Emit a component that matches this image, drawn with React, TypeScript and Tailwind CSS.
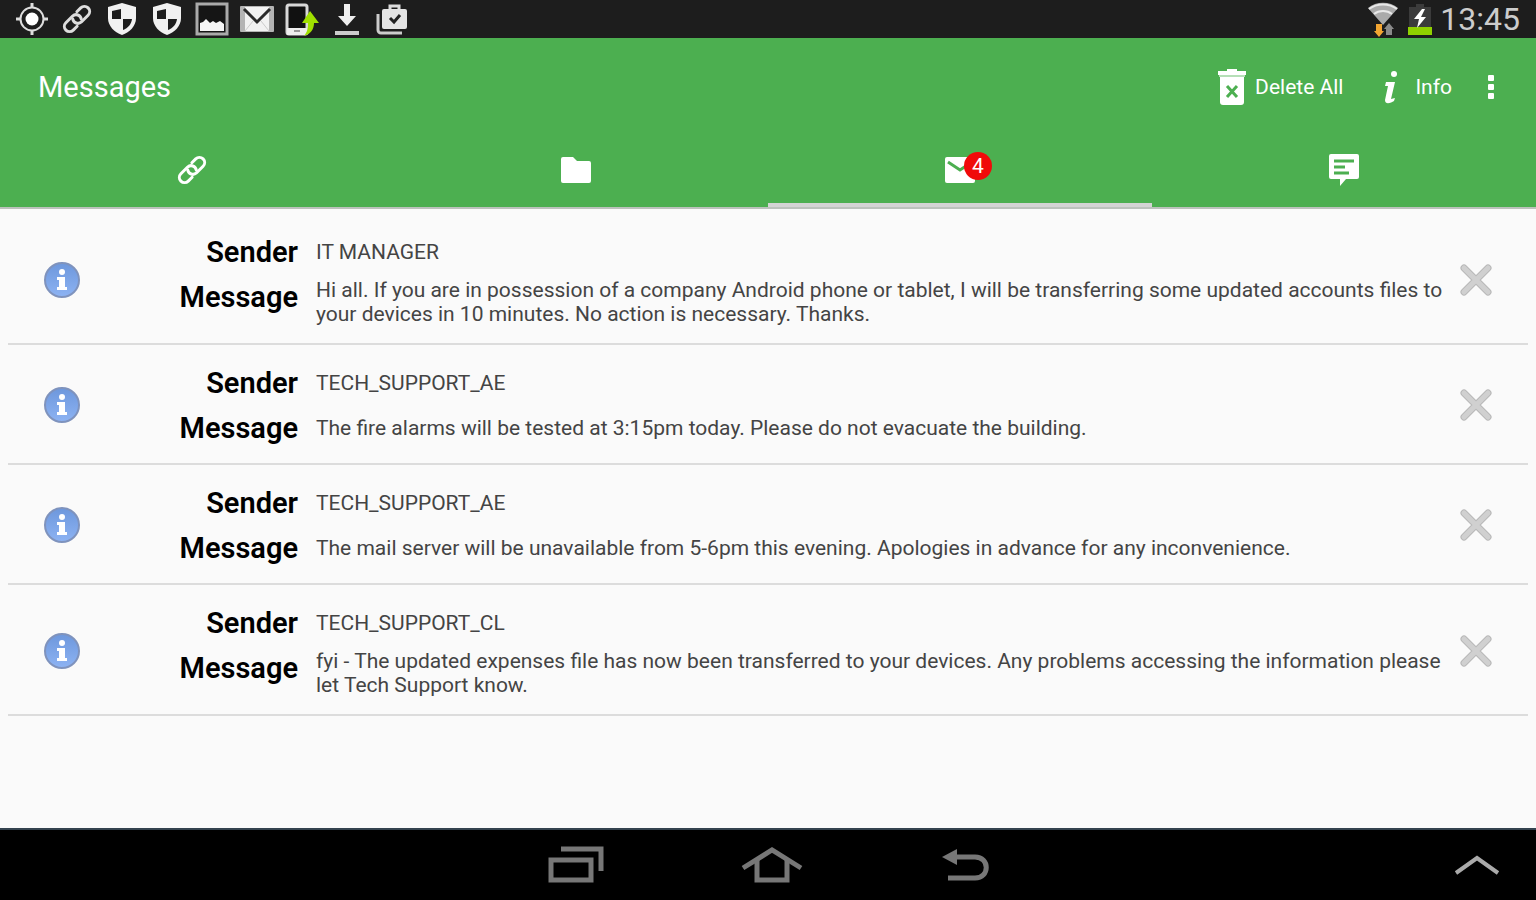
import React, { useState } from 'react';

interface Message {
    id: number;
    sender: string;
    text: string;
}

const initialMessages: Message[] = [
    { id: 1, sender: 'IT MANAGER', text: 'Hi all. If you are in possession of a company Android phone or tablet, I will be transferring some updated accounts files to your devices in 10 minutes. No action is necessary. Thanks.' },
    { id: 2, sender: 'TECH_SUPPORT_AE', text: 'The fire alarms will be tested at 3:15pm today. Please do not evacuate the building.' },
    { id: 3, sender: 'TECH_SUPPORT_AE', text: 'The mail server will be unavailable from 5-6pm this evening. Apologies in advance for any inconvenience.' },
    { id: 4, sender: 'TECH_SUPPORT_CL', text: 'fyi - The updated expenses file has now been transferred to your devices. Any problems accessing the information please let Tech Support know.' },
];

const LinkIcon: React.FC = () => (
    <svg width="32" height="32" viewBox="-16 -16 32 32" fill="none" stroke="currentColor" strokeWidth="3" strokeLinecap="round">
        <g transform="rotate(-45)">
            <path d="M-5 5.200H-10.500A5.200 5.200 0 0 1-10.500-5.200H-1A5.200 5.200 0 0 1 3 3" />
            <path d="M5-5.200H10.500A5.200 5.200 0 0 1 10.500 5.200H1A5.200 5.200 0 0 1-3-3" />
        </g>
    </svg>
);

const LocationIcon: React.FC = () => (
    <svg width="34" height="34" viewBox="0 0 34 34" fill="none" stroke="currentColor" strokeWidth="2">
        <circle cx="17" cy="17" r="11.5" />
        <circle cx="17" cy="17" r="6.5" fill="#fff" stroke="none" />
        <path d="M17 1v5M17 28v5M1 17h5M28 17h5" strokeWidth="3" />
    </svg>
);

const ShieldIcon: React.FC = () => (
    <svg width="30" height="34" viewBox="0 0 30 34">
        <path d="M15 1L29 5V16C29 24 23 30 15 33C7 30 1 24 1 16V5Z" fill="#f1f1f1" />
        <path d="M14 7V17H5V9ZM16 17H25C24.500 22 21 26 16 28Z" fill="#1d1d1d" />
    </svg>
);

const PictureIcon: React.FC = () => (
    <svg width="34" height="34" viewBox="0 0 34 34">
        <rect x="2" y="2" width="30" height="30" fill="#151515" stroke="#aaa" strokeWidth="3" />
        <path d="M5 29V21L8 20L11 17L15 21L18 19L21 21L25 19L29 22V29Z" fill="#f5f5f5" />
    </svg>
);

const GmailIcon: React.FC = () => (
    <svg width="36" height="28" viewBox="0 0 36 28">
        <rect x="1" y="1" width="34" height="26" rx="1" fill="#b4b4b4" />
        <path d="M6 2H30V26H6Z" fill="#f2f2f2" />
        <path d="M5 4L18 17L31 4" fill="none" stroke="#2a2a2a" strokeWidth="3" />
        <path d="M6 26L14 16M30 26L22 16" stroke="#ccc" strokeWidth="1" />
    </svg>
);

const PhoneIcon: React.FC = () => (
    <svg width="34" height="34" viewBox="0 0 34 34">
        <rect x="2" y="3" width="20" height="29" rx="2" fill="#111" stroke="#d8d8d8" strokeWidth="3" />
        <path d="M2 26H22V33H2Z" fill="#eee" />
        <path d="M9 29H15" stroke="#999" strokeWidth="2" />
        <path d="M25 9L34 21H29C29 27 26 32 19 34C23 29 23 26 23 21H17Z" fill="#a0e000" />
    </svg>
);

const DownloadIcon: React.FC = () => (
    <svg width="28" height="34" viewBox="0 0 28 34" fill="#eee">
        <path d="M11 2H17V14H23L14 24L5 14H11Z" />
        <rect x="2" y="29" width="24" height="4" fill="#ccc" />
    </svg>
);

const WorkIcon: React.FC = () => (
    <svg width="34" height="32" viewBox="0 0 34 32">
        <path d="M3 11V27A3 3 0 0 0 6 30H27" fill="none" stroke="#ccc" strokeWidth="3" />
        <path d="M15 7V3H24V7" fill="none" stroke="#ddd" strokeWidth="3" />
        <rect x="7" y="6" width="25" height="20" rx="2" fill="#e4e4e4" />
        <path d="M15 15L19 19L25 12" fill="none" stroke="#222" strokeWidth="3" />
    </svg>
);

const WifiIcon: React.FC = () => (
    <svg width="34" height="36" viewBox="0 0 34 36">
        <path d="M2 7C10 0 24 0 32 7L17 24Z" fill="#aaa" />
        <path d="M3 8C11 2 23 2 31 8M8 13C13 9 21 9 26 13" fill="none" stroke="#e8e8e8" strokeWidth="2" />
        <path d="M10 23H16V30H18L13 36L8 30H10Z" fill="#f2a531" />
        <path d="M23 22L28 28H26V34H20V28H18Z" fill="#8a8a8a" />
    </svg>
);

const BatteryIcon: React.FC = () => (
    <svg width="24" height="32" viewBox="0 0 24 32">
        <path d="M8 1H16V4H23V24H1V4H8Z" fill="#3b3b3b" />
        <rect x="0" y="24" width="24" height="8" fill="#8fd000" />
        <path d="M14 6L6 16H11L9 25L18 14H13L17 6Z" fill="#fff" />
    </svg>
);

const TrashIcon: React.FC = () => (
    <svg width="30" height="38" viewBox="0 0 30 38">
        <path d="M10 1H20V3H29V7H1V3H10Z" fill="#fff" />
        <path d="M3 8H27V34A3 3 0 0 1 24 37H6A3 3 0 0 1 3 34Z" fill="#fff" />
        <path d="M2 8H28" stroke="#b5dfb7" strokeWidth="2" />
        <path d="M10 18L20 29M20 18L10 29" stroke="#4caf50" strokeWidth="3" />
    </svg>
);

const InfoIcon: React.FC = () => (
    <svg width="16" height="34" viewBox="0 0 16 34" fill="#fff">
        <circle cx="11" cy="4" r="3" />
        <path d="M3 12H12L8 29L12 28L11 31C8 33 2 35 2 30L5 16H2Z" />
    </svg>
);

const FolderIcon: React.FC = () => (
    <svg width="32" height="28" viewBox="0 0 32 28" fill="#fff">
        <path d="M3 1H13L17 5H29A2 2 0 0 1 31 7V25A2 2 0 0 1 29 27H3A2 2 0 0 1 1 25V3A2 2 0 0 1 3 1Z" />
    </svg>
);

const MailIcon: React.FC = () => (
    <svg width="32" height="28" viewBox="0 0 32 28">
        <rect x="1" y="1" width="30" height="26" rx="2" fill="#fff" />
        <path d="M4 6L16 14L28 6" fill="none" stroke="#4caf50" strokeWidth="3" />
    </svg>
);

const ChatIcon: React.FC = () => (
    <svg width="32" height="34" viewBox="0 0 32 34">
        <path d="M3 1H29A2 2 0 0 1 31 3V24A2 2 0 0 1 29 26H18L12 33V26H3A2 2 0 0 1 1 24V3A2 2 0 0 1 3 1Z" fill="#fff" />
        <path d="M6 8H26M6 14H17M6 20H21" stroke="#4caf50" strokeWidth="3" />
    </svg>
);

const MessageInfoIcon: React.FC = () => (
    <svg width="38" height="38" viewBox="0 0 38 38">
        <defs>
            <linearGradient id="ball" x1="0" y1="0" x2="0" y2="1">
                <stop offset="0" stopColor="#6d97dc" />
                <stop offset="1" stopColor="#8db3f3" />
            </linearGradient>
        </defs>
        <circle cx="19" cy="19" r="17" fill="url(#ball)" stroke="#7f93bd" strokeWidth="2" />
        <circle cx="19" cy="11" r="3" fill="#fff" />
        <path d="M14 16H22V26H24V29H14V26H16V19H14Z" fill="#fff" />
    </svg>
);

const RemoveIcon: React.FC = () => (
    <svg width="32" height="32" viewBox="0 0 32 32" fill="none">
        <path d="M4 4L28 28M28 4L4 28" stroke="#b8b8b8" strokeWidth="7" strokeLinecap="round" />
        <path d="M4 4L28 28M28 4L4 28" stroke="#d0d0d0" strokeWidth="5" strokeLinecap="round" />
    </svg>
);

const tabs = [
    { name: 'Links', icon: <LinkIcon /> },
    { name: 'Files', icon: <FolderIcon /> },
    { name: 'Messages', icon: <MailIcon /> },
    { name: 'Chat', icon: <ChatIcon /> },
];

const statusIcons = [LocationIcon, LinkIcon, ShieldIcon, ShieldIcon, PictureIcon, GmailIcon, PhoneIcon, DownloadIcon, WorkIcon];

const App: React.FC = () => {
    const [messages, setMessages] = useState<Message[]>(initialMessages);
    const [activeTab, setActiveTab] = useState(2);

    const handleDelete = (id: number) => {
        setMessages(messages.filter((message) => message.id !== id));
    };

    return (
        <div className="min-h-screen flex flex-col bg-[#fafafa] font-[Roboto,sans-serif]">
            <div className="h-[38px] flex items-center justify-between bg-[#1d1d1d] pl-[9px] pr-4 text-[#ddd]">
                <div className="flex items-center">
                    {statusIcons.map((Icon, index) => (
                        <span key={index} className="w-[45px] flex justify-center"><Icon /></span>
                    ))}
                </div>
                <div className="flex items-center gap-2">
                    <WifiIcon />
                    <BatteryIcon />
                    <span className="text-[32px] leading-9 text-[#ccc]">13:45</span>
                </div>
            </div>

            <header className="bg-[#4caf50] text-white">
                <div className="h-[98px] flex items-center justify-between pl-[38px] pr-[38px]">
                    <h1 className="text-[29px] leading-9">Messages</h1>
                    <div className="flex items-center text-[21px] leading-6">
                        <button className="flex items-center gap-2" onClick={() => setMessages([])}>
                            <TrashIcon />
                            Delete All
                        </button>
                        <button className="flex items-center gap-4 ml-10">
                            <InfoIcon />
                            Info
                        </button>
                        <button className="ml-8" aria-label="More options">
                            <svg width="14" height="28" viewBox="0 0 14 28" fill="#fff">
                                <rect x="4" y="2" width="6" height="6" rx="1" />
                                <rect x="4" y="11" width="6" height="6" rx="1" />
                                <rect x="4" y="20" width="6" height="6" rx="1" />
                            </svg>
                        </button>
                    </div>
                </div>
                <nav className="grid grid-cols-4 border-b-2 border-[#bcc2bc]">
                    {tabs.map((tab, index) => (
                        <button
                            key={tab.name}
                            aria-label={tab.name}
                            className={`h-[71px] flex items-center justify-center border-b-4 ${activeTab === index ? 'border-[#d4d4d4]' : 'border-[#4caf50]'}`}
                            onClick={() => setActiveTab(index)}
                        >
                            <span className="relative">
                                {tab.icon}
                                {index === 2 && messages.length > 0 && (
                                    <span className="absolute -top-1 left-5 size-7 rounded-full bg-[#f00a0a] text-[21px] leading-7 text-center">{messages.length}</span>
                                )}
                            </span>
                        </button>
                    ))}
                </nav>
            </header>

            <main className="flex-grow px-2 pt-[5px]">
                <ul>
                    {messages.map((message) => (
                        <li key={message.id} className="flex items-center border-b-2 border-[#dcdcdc] pt-[15px] pb-[13px]">
                            <span className="w-[108px] flex justify-center"><MessageInfoIcon /></span>
                            <dl className="flex-1 grid grid-cols-[182px_1fr] gap-x-[18px] text-[21px] leading-6 text-[#444]">
                                <dt className="h-[45px] flex items-center justify-end text-[29px] font-semibold text-black">Sender</dt>
                                <dd className="h-[45px] flex items-center">{message.sender}</dd>
                                <dt className="h-[45px] flex items-center justify-end text-[29px] font-semibold text-black">Message</dt>
                                <dd className="min-h-[45px] flex items-center py-1">{message.text}</dd>
                            </dl>
                            <button className="w-[84px] pl-4" aria-label="Delete message" onClick={() => handleDelete(message.id)}>
                                <RemoveIcon />
                            </button>
                        </li>
                    ))}
                </ul>
            </main>

            <footer className="h-[72px] grid grid-cols-[1fr_auto_1fr] items-center bg-black border-t-2 border-[#34434f] text-[#777]">
                <span />
                <div className="flex items-center gap-[136px]">
                    <button aria-label="Recent apps">
                        <svg width="60" height="40" viewBox="0 0 60 40" fill="none" stroke="currentColor" strokeWidth="5">
                            <path d="M6 15H46V35H6Z" />
                            <path d="M16 4H56V26" />
                        </svg>
                    </button>
                    <button aria-label="Home">
                        <svg width="62" height="40" viewBox="0 0 62 40" fill="none" stroke="currentColor" strokeWidth="5">
                            <path d="M2 23L31 5L60 23" />
                            <path d="M16 15V35H46V15" />
                        </svg>
                    </button>
                    <button aria-label="Back">
                        <svg width="52" height="40" viewBox="0 0 52 40" fill="none" stroke="currentColor" strokeWidth="5">
                            <path d="M14 12H36C51 12 51 33 36 33H9" />
                            <path d="M3 12L18 4V20Z" fill="currentColor" stroke="none" />
                        </svg>
                    </button>
                </div>
                <button className="justify-self-end mr-9" aria-label="Expand">
                    <svg width="46" height="24" viewBox="0 0 46 24" fill="none" stroke="#aaa" strokeWidth="4">
                        <path d="M2 20L23 5L44 20" />
                    </svg>
                </button>
            </footer>
        </div>
    );
};

export default App;
